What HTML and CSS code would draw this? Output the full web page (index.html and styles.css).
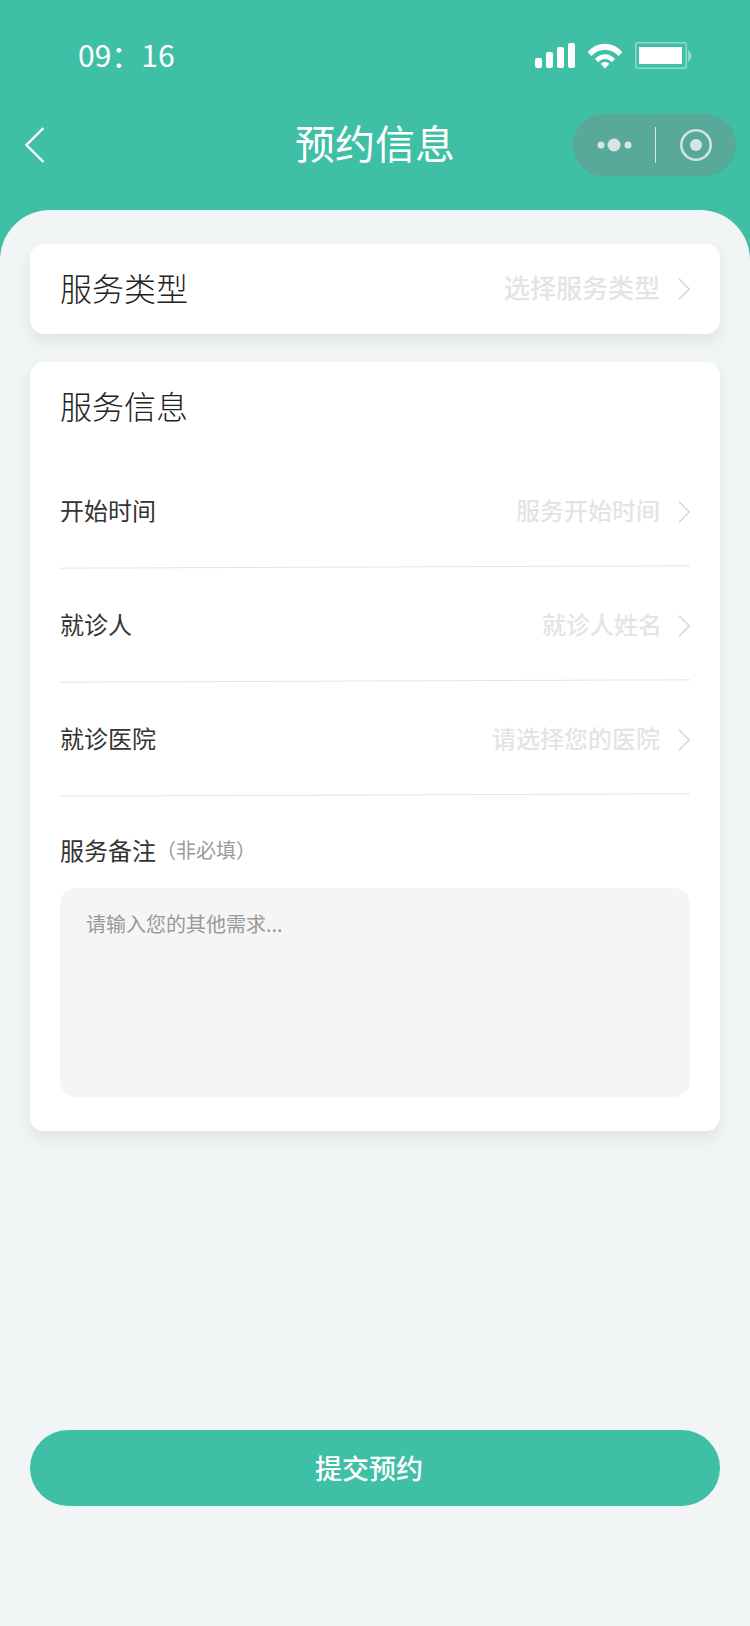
FILE: index.html
```html
<!DOCTYPE html>
<html lang="zh-CN">
<head>
<meta charset="utf-8">
<title>预约信息</title>
<link rel="stylesheet" href="styles.css">
</head>
<body>
<div class="page">
  <header class="header">
    <div class="status">
      <span class="time">09：16</span>
      <div class="status-icons">
        <svg class="signal" width="40" height="25" viewBox="0 0 40 25"><rect x="0" y="15" width="7" height="10" rx="2"/><rect x="11" y="9" width="7" height="16" rx="2"/><rect x="22" y="4" width="7" height="21" rx="2"/><rect x="33" y="0" width="7" height="25" rx="2"/></svg>
        <svg class="wifi" width="36" height="26" viewBox="0 0 37 27"><path d="M0.5 9.5C10.5 -2 26.5 -2 36.5 9.5L32.5 13.5C24.5 5 12.5 5 4.5 13.5Z"/><path d="M8 16.5C14 10 23 10 29 16.5L25.5 20C21 15.5 16 15.5 11.5 20Z"/><path d="M14 21.5C16.5 19 20.5 19 23 21.5L18.5 26.5Z"/></svg>
        <svg class="battery" width="57" height="27" viewBox="0 0 57 27"><rect class="batt-frame" x="0.75" y="0.75" width="50.5" height="25.5" rx="2"/><rect class="batt-fill" x="4" y="5" width="43" height="17"/><path class="batt-nub" d="M53 8C55.5 10 56.5 12 56.5 14C56.5 16 55.5 18 53 20Z"/></svg>
      </div>
    </div>
    <nav class="nav">
      <svg class="back" width="20" height="36" viewBox="0 0 20 36"><path d="M18.5 1L1.5 18L18.5 35"/></svg>
      <h1 class="nav-title">预约信息</h1>
      <div class="capsule">
        <svg class="capsule-svg" width="163" height="62" viewBox="0 0 163 62"><circle cx="28" cy="31" r="3.5"/><circle cx="41" cy="31" r="6.5"/><circle cx="55" cy="31" r="3.5"/><rect class="capsule-div" x="82" y="13" width="1" height="36"/><circle class="capsule-ring" cx="123" cy="31" r="14.7"/><circle cx="123" cy="31" r="6"/></svg>
      </div>
    </nav>
  </header>

  <main class="sheet">
    <section class="card card-type">
      <div class="row-main">
        <span class="heading">服务类型</span>
        <span class="value value-lg">选择服务类型</span>
        <svg class="chev" width="12" height="22" viewBox="0 0 12 22"><path d="M1 0.7L11.2 11L1 21.3"/></svg>
      </div>
    </section>

    <section class="card card-info">
      <div class="heading card-head">服务信息</div>

      <div class="row">
        <span class="label">开始时间</span>
        <span class="value">服务开始时间</span>
        <svg class="chev" width="12" height="22" viewBox="0 0 12 22"><path d="M1 0.7L11.2 11L1 21.3"/></svg>
      </div>
      <svg class="rule" width="630" height="4" viewBox="0 0 630 4"><line x1="0" y1="3.2" x2="630" y2="0.8"/></svg>

      <div class="row">
        <span class="label">就诊人</span>
        <span class="value value-wide">就诊人姓名</span>
        <svg class="chev" width="12" height="22" viewBox="0 0 12 22"><path d="M1 0.7L11.2 11L1 21.3"/></svg>
      </div>
      <svg class="rule" width="630" height="4" viewBox="0 0 630 4"><line x1="0" y1="3.2" x2="630" y2="0.8"/></svg>

      <div class="row">
        <span class="label">就诊医院</span>
        <span class="value">请选择您的医院</span>
        <svg class="chev" width="12" height="22" viewBox="0 0 12 22"><path d="M1 0.7L11.2 11L1 21.3"/></svg>
      </div>
      <svg class="rule" width="630" height="4" viewBox="0 0 630 4"><line x1="0" y1="3.2" x2="630" y2="0.8"/></svg>

      <div class="note-label"><span class="label">服务备注</span><span class="optional">（非必填）</span></div>
      <div class="note-box">请输入您的其他需求...</div>
    </section>

    <button class="submit" type="button">提交预约</button>
  </main>
</div>
</body>
</html>
```
FILE: styles.css
```css
* { box-sizing: border-box; }
html, body { margin: 0; padding: 0; }
body {
  font-family: "Noto Sans CJK SC", "Noto Sans", sans-serif;
  background: #3fbfa5;
}
.page {
  width: 750px;
  height: 1626px;
  display: flex;
  flex-direction: column;
  overflow: hidden;
  background: #3fbfa5;
}
.header { height: 210px; flex: none; }
.status {
  height: 114px;
  padding: 40px 58px 0 78px;
  display: flex;
  justify-content: space-between;
  align-items: flex-start;
}
.time { color: #fff; font-size: 30px; line-height: 28px; }
.status-icons { display: flex; align-items: flex-start; gap: 12px; margin-top: 2px; }
.signal { fill: #fff; margin-top: 1px; }
.wifi { fill: #fff; margin-top: 1px; }
.batt-frame { fill: none; stroke: #8ddccb; stroke-width: 1.5; }
.batt-fill { fill: #fff; }
.batt-nub { fill: #8ddccb; }

.nav {
  height: 62px;
  padding: 0 14px;
  display: grid;
  grid-template-columns: 1fr auto 1fr;
  align-items: center;
}
.back { margin-left: 11px; fill: none; stroke: #fff; stroke-width: 2.4; }
.nav-title { margin: -7px 0 0; color: #fff; font-size: 40px; font-weight: 400; line-height: 62px; }
.capsule {
  justify-self: end;
  width: 163px;
  height: 62px;
  border-radius: 31px;
  background: #58a999;
}
.capsule-svg { display: block; fill: #d6e6e2; }
.capsule-div { fill: #d6e6e2; }
.capsule-ring { fill: none; stroke: #cfe4df; stroke-width: 2.6; }

.sheet {
  flex: 1;
  padding: 34px 30px 0;
  background: #f1f5f6;
  border-radius: 50px 50px 0 0;
  display: flex;
  flex-direction: column;
}
.card {
  background: #fff;
  border-radius: 14px;
  box-shadow: 0 7px 16px rgba(0, 0, 0, 0.08);
}
.card-type { height: 90px; padding: 0 30px; display: flex; align-items: center; }
.row-main { flex: 1; display: flex; align-items: center; padding-bottom: 4px; }
.row-main .chev { margin-top: 4px; }
.heading { font-size: 32px; font-weight: 300; color: #222; line-height: 46px; }
.card-info { height: 769px; margin-top: 28px; padding: 0 30px; }
.card-head { padding-top: 20px; height: 93px; }
.row { height: 112px; display: flex; align-items: center; padding-bottom: 2px; }
.label { font-size: 24px; color: #333; line-height: 34px; }
.value { margin-left: auto; font-size: 24px; font-weight: 500; color: #e4e4e4; line-height: 34px; }
.value-lg { font-size: 26px; }
.value-wide { margin-right: -2px; }
.chev { flex: none; margin-left: 18px; margin-top: 3px; fill: none; stroke: #d6d6d6; stroke-width: 1.5; }
.rule { display: block; height: 4px; margin-top: -2px; }
.rule line { stroke: #e4e4e4; stroke-width: 1; }
.note-label { margin-top: 33px; height: 40px; display: flex; align-items: center; }
.optional { font-size: 20px; color: #999; line-height: 34px; }
.note-box {
  margin-top: 18px;
  height: 209px;
  padding: 21px 26px;
  background: #f5f5f5;
  border-radius: 16px;
  font-size: 20px;
  line-height: 30px;
  color: #999;
}
.submit {
  display: block;
  width: 690px;
  height: 76px;
  margin-top: 299px;
  padding: 0 12px 2px 0;
  border: 0;
  border-radius: 38px;
  background: #3fbfa5;
  color: #fff;
  font-family: inherit;
  font-size: 27px;
  font-weight: 500;
}
```
